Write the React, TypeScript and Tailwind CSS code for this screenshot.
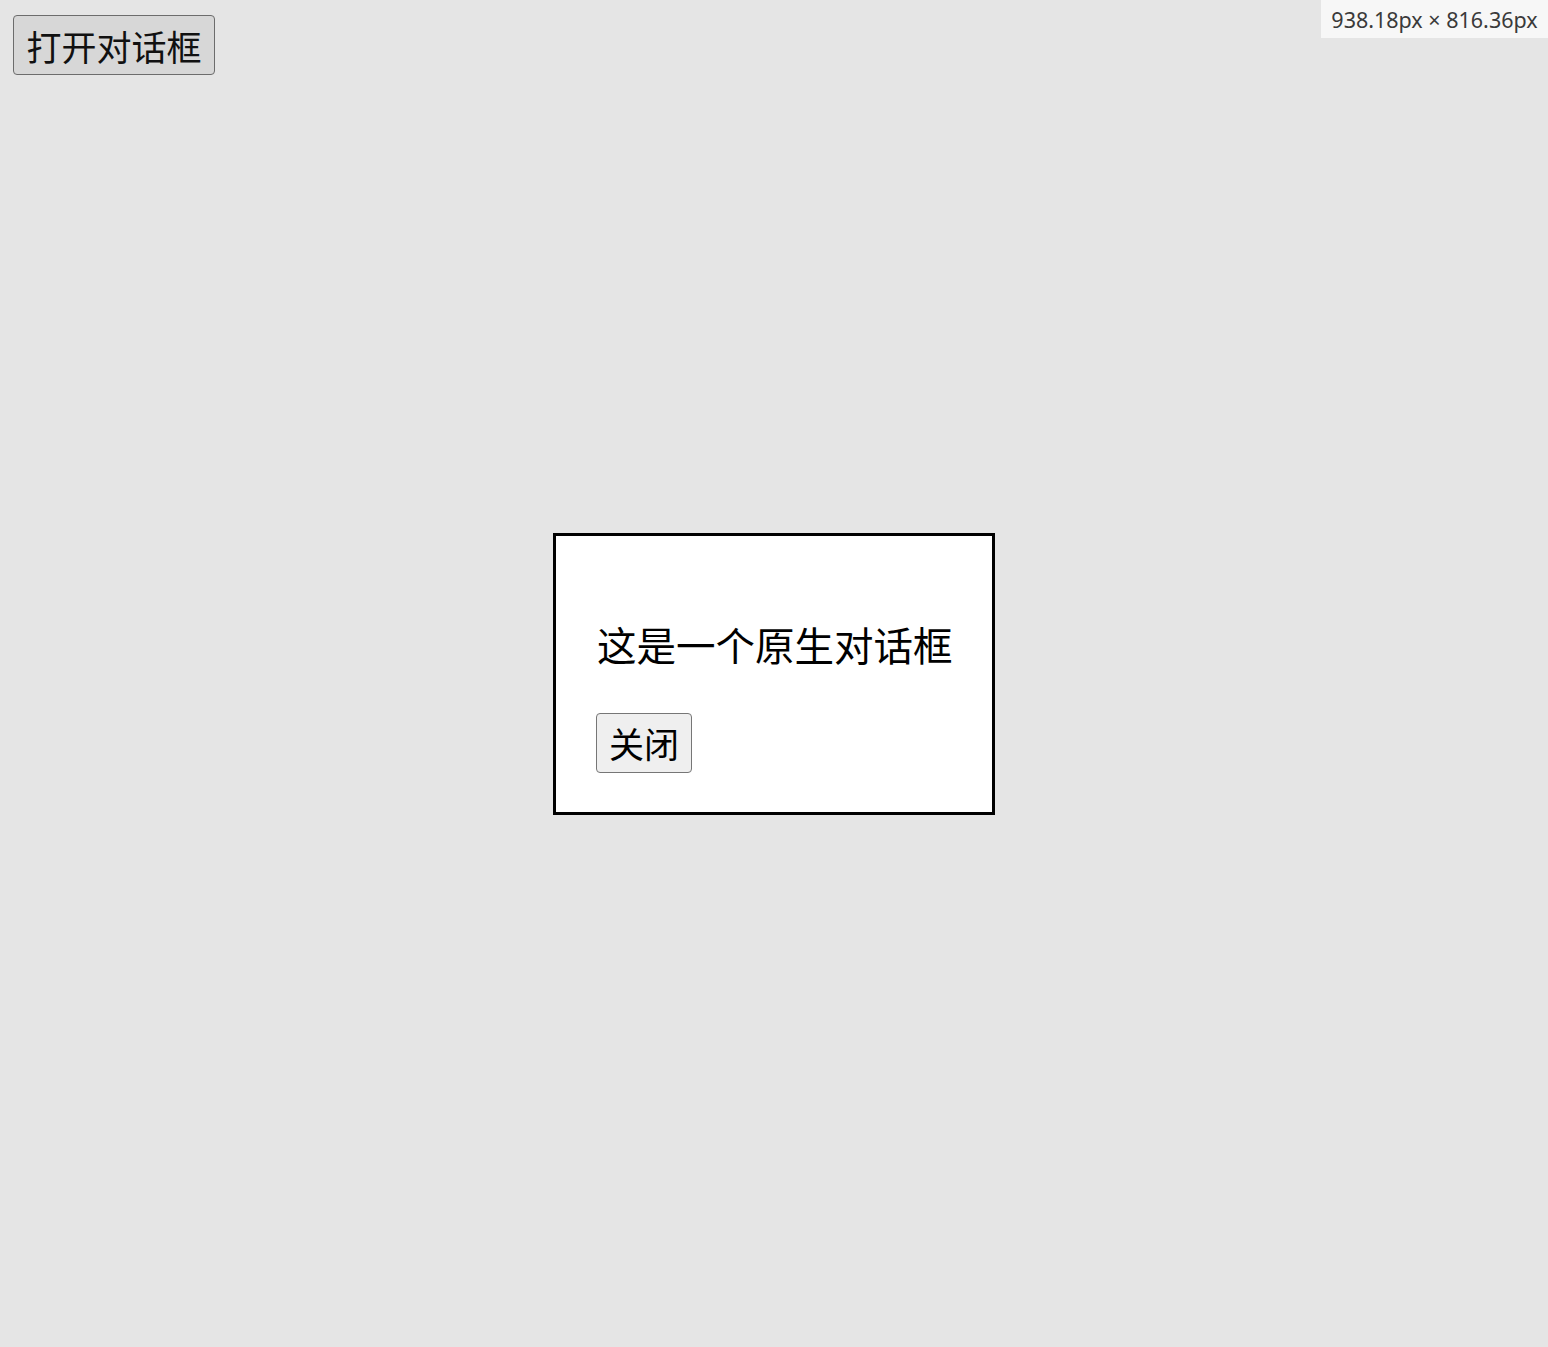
import React from "react"

const cjk = { fontFamily: '"Noto Sans CJK SC", "Noto Sans", sans-serif' }

export default function App() {
    return (
        <div className="relative h-[1347px] w-full overflow-hidden bg-[#e5e5e5]" style={cjk}>
            <div className="pl-[13px] pt-[15px]">
                <button className="flex h-[60px] w-[202px] items-center justify-center rounded-[4px] border border-[#6c6c6c] bg-[#d7d7d7] text-[35px] leading-none text-[#111]">
                    打开对话框
                </button>
            </div>

            {/* size label */}
            <div
                className="absolute right-0 top-0 flex h-[38px] w-[227px] items-center justify-center bg-[#f7f7f7] pt-[2px] text-[21.5px] text-[#3a3a3a]"
                style={{ fontFamily: '"Noto Sans", "Open Sans", sans-serif' }}
            >
                938.18px × 816.36px
            </div>

            {/* dialog */}
            <div className="absolute inset-0 flex items-center justify-center">
                <div className="flex h-[282px] w-[442px] flex-col border-[3px] border-black bg-white pl-[41px] pr-[40px] pt-[88px]">
                    <p className="h-[40px] whitespace-nowrap text-[39.5px] leading-[40px] text-black">这是一个原生对话框</p>
                    <div className="mt-[49px]">
                        <button className="-ml-px flex h-[60px] w-[96px] items-center justify-center rounded-[4px] border border-[#767676] bg-[#efefef] text-[35px] leading-none text-black">
                            关闭
                        </button>
                    </div>
                </div>
            </div>
        </div>
    )
}
